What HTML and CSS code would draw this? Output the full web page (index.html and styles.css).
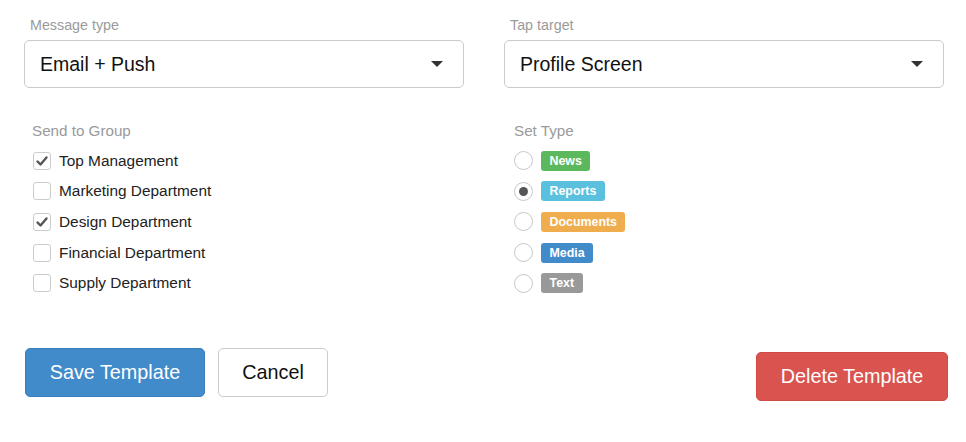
FILE: index.html
```html
<!DOCTYPE html>
<html lang="en">
<head>
    <meta charset="UTF-8">
    <meta name="viewport" content="width=device-width, initial-scale=1.0">
    <title>Message Template</title>
    <link rel="stylesheet" href="styles.css">
</head>
<body>

    <!-- Delivery settings -->
    <div class="form-row">
        <div class="field">
            <label class="field-label">Message type</label>
            <div class="select-box">
                <span>Email + Push</span>
                <span class="caret"></span>
            </div>
        </div>
        <div class="field">
            <label class="field-label">Tap target</label>
            <div class="select-box">
                <span>Profile Screen</span>
                <span class="caret"></span>
            </div>
        </div>
    </div>

    <!-- Recipients and type -->
    <div class="form-row">
        <div class="group group-left">
            <h4 class="group-label">Send to Group</h4>
            <div class="check-row"><span class="checkbox checked"><svg width="16" height="16" viewBox="0 0 16 16"><polyline points="3.5,8.5 6.5,11.5 12.5,4.5" fill="none" stroke="#555" stroke-width="2.4" stroke-linecap="round" stroke-linejoin="round"/></svg></span>Top Management</div>
            <div class="check-row"><span class="checkbox"></span>Marketing Department</div>
            <div class="check-row"><span class="checkbox checked"><svg width="16" height="16" viewBox="0 0 16 16"><polyline points="3.5,8.5 6.5,11.5 12.5,4.5" fill="none" stroke="#555" stroke-width="2.4" stroke-linecap="round" stroke-linejoin="round"/></svg></span>Design Department</div>
            <div class="check-row"><span class="checkbox"></span>Financial Department</div>
            <div class="check-row"><span class="checkbox"></span>Supply Department</div>
        </div>
        <div class="group group-right">
            <h4 class="group-label">Set Type</h4>
            <div class="check-row"><span class="radio"></span><span class="badge badge-news">News</span></div>
            <div class="check-row"><span class="radio selected"></span><span class="badge badge-reports">Reports</span></div>
            <div class="check-row"><span class="radio"></span><span class="badge badge-documents">Documents</span></div>
            <div class="check-row"><span class="radio"></span><span class="badge badge-media">Media</span></div>
            <div class="check-row"><span class="radio"></span><span class="badge badge-text">Text</span></div>
        </div>
    </div>

    <!-- Actions -->
    <div class="actions">
        <div class="actions-left">
            <button class="btn btn-primary">Save Template</button>
            <button class="btn btn-default">Cancel</button>
        </div>
        <button class="btn btn-danger">Delete Template</button>
    </div>

</body>
</html>
```

FILE: styles.css
```css
body {
    margin: 0;
    padding: 15px 22px 0 24px;
    font-family: 'Liberation Sans', Arial, sans-serif;
    background-color: white;
    color: #222;
}

.form-row {
    display: grid;
    grid-template-columns: 440px 440px;
    gap: 40px;
}

.field-label {
    display: block;
    font-size: 14.3px;
    line-height: 20px;
    color: #9a9a9a;
    padding-left: 6px;
    margin-bottom: 5px;
}

.select-box {
    height: 48px;
    box-sizing: border-box;
    border: 1px solid #ccc;
    border-radius: 5px;
    padding: 0 20px 0 15px;
    display: flex;
    align-items: center;
    justify-content: space-between;
    font-size: 19.5px;
    color: #111;
}

/* Dropdown arrow */
.caret {
    width: 0;
    height: 0;
    border-left: 6px solid transparent;
    border-right: 6px solid transparent;
    border-top: 6px solid #333;
}

.group {
    margin-top: 33px;
}

.group-left {
    padding-left: 8px;
}

.group-right {
    padding-left: 10px;
}

.group-label {
    margin: 0 0 4.5px;
    font-size: 15.2px;
    line-height: 20px;
    font-weight: normal;
    color: #9a9a9a;
}

.check-row {
    display: flex;
    align-items: center;
    height: 30.6px;
    font-size: 15.4px;
    gap: 8px;
}

.checkbox {
    width: 18px;
    height: 18px;
    box-sizing: border-box;
    border: 1px solid #ccc;
    border-radius: 3px;
    display: flex;
    align-items: center;
    justify-content: center;
    margin-left: 1px;
}

.radio {
    width: 19px;
    height: 19px;
    box-sizing: border-box;
    border: 1px solid #c8c8c8;
    border-radius: 50%;
    display: flex;
    align-items: center;
    justify-content: center;
}

.radio.selected::after {
    content: '';
    width: 9px;
    height: 9px;
    border-radius: 50%;
    background-color: #555;
}

.badge {
    height: 20px;
    line-height: 20px;
    padding: 0 8.5px;
    border-radius: 3px;
    font-size: 12.4px;
    font-weight: bold;
    color: white;
}

.badge-news { background-color: #5cb85c; }
.badge-reports { background-color: #5bc0de; }
.badge-documents { background-color: #f0ad4e; }
.badge-media { background-color: #428bca; }
.badge-text { background-color: #999; }

.actions {
    display: flex;
    justify-content: space-between;
    align-items: flex-start;
    margin-top: 50px;
    margin-right: -4px;
    padding-left: 1px;
}

.actions-left {
    display: flex;
    gap: 13px;
}

.btn {
    height: 49px;
    box-sizing: border-box;
    border-radius: 5px;
    font-family: inherit;
    font-size: 19.8px;
    border: 1px solid transparent;
    padding: 0;
    cursor: pointer;
}

.btn-primary {
    width: 180px;
    background-color: #428bca;
    border-color: #3a80bd;
    color: white;
}

.btn-default {
    width: 110px;
    background-color: white;
    border-color: #ccc;
    color: #111;
}

.btn-danger {
    width: 192px;
    margin-top: 4px;
    background-color: #d9534f;
    border-color: #d04a46;
    color: white;
}
```
